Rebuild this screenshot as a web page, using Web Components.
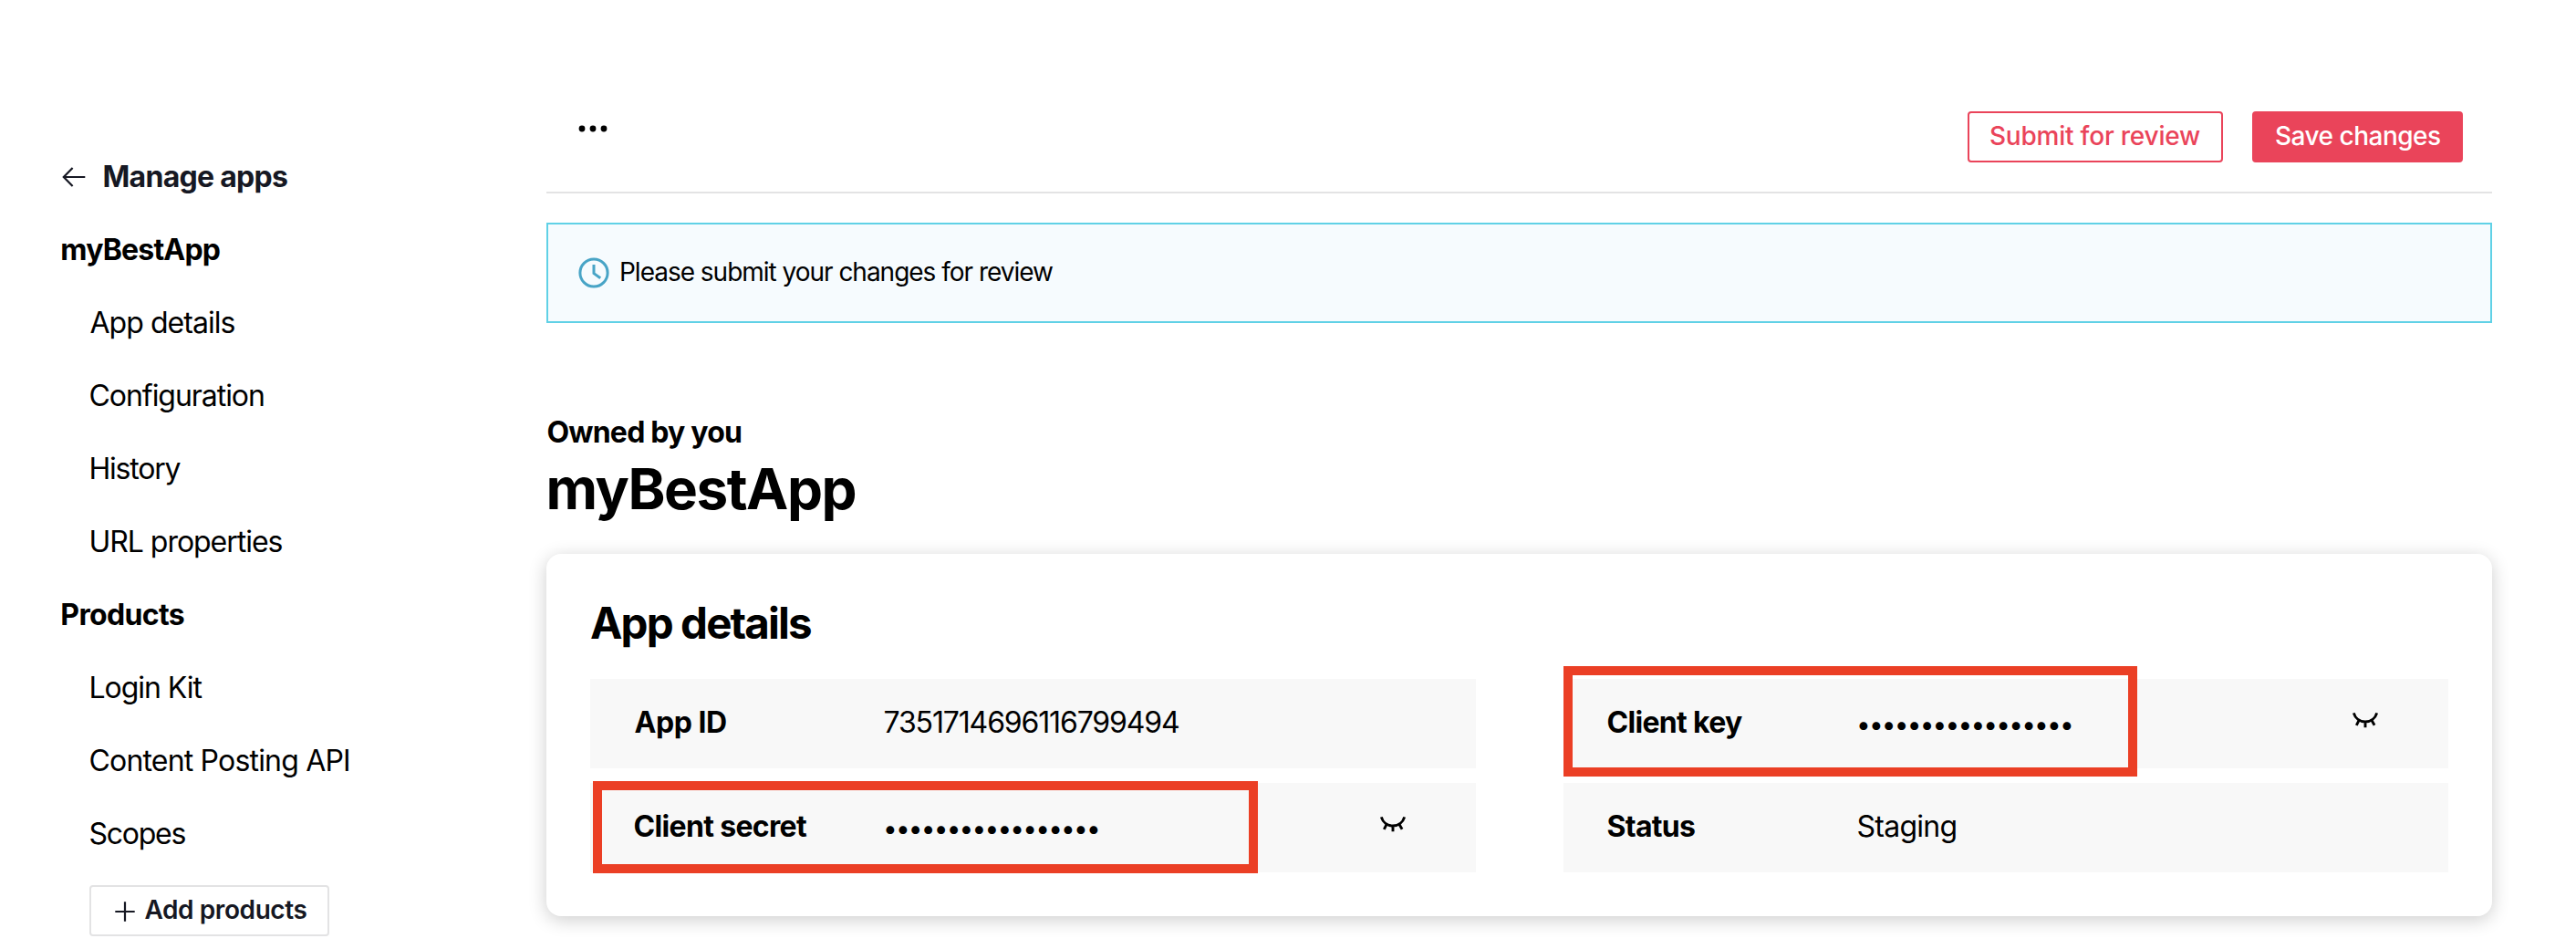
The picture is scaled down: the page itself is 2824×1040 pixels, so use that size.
<!DOCTYPE html>
<html lang="en">
<head>
<meta charset="utf-8">
<title>App details</title>
<style>
html,body{margin:0;background:#fff}
body{font-family:Inter,"Liberation Sans",sans-serif;font-size:32px;color:#000}
</style>
</head>
<body>
<developer-portal></developer-portal>
<script>
const define = (name, html, init) => {
  const t = document.createElement('template');
  t.innerHTML = html;
  customElements.define(name, class extends HTMLElement {
    constructor() {
      super();
      this.attachShadow({mode: 'open'}).append(t.content.cloneNode(true));
    }
    connectedCallback() { if (init) init.call(this, this.shadowRoot); }
  });
};

/* One line of text, tracked so that its ink spans the "span" width. */
define('text-line', `<style>
:host{display:block;white-space:pre;flex:none;line-height:1.25}
span{display:inline-block}
</style><span><slot></slot></span>`, function (root) {
  const cs = getComputedStyle(this), c = document.createElement('canvas').getContext('2d');
  c.font = `${cs.fontWeight} ${cs.fontSize} ${cs.fontFamily}`;
  const s = this.textContent, m = c.measureText(s), want = +this.getAttribute('span');
  const ls = (want - m.actualBoundingBoxLeft - m.actualBoundingBoxRight) / (s.length - 1);
  const span = root.querySelector('span');
  span.style.letterSpacing = ls.toFixed(3) + 'px';
  span.style.marginLeft = m.actualBoundingBoxLeft.toFixed(2) + 'px';
  this.style.width = want + 'px';
});

define('icon-back', `<style>:host{display:block;width:26px;height:22px}svg{display:block}</style>
<svg width="26" height="22" viewBox="0 0 26 22" fill="none" stroke="#161823" stroke-width="2.2"><path d="M25.3 11H1.8M11.6 1L1.8 11l9.8 10"/></svg>`);
define('icon-plus', `<style>:host{display:block;width:22px;height:22px}svg{display:block}</style>
<svg width="22" height="22" fill="none" stroke="#161823" stroke-width="2.2"><path d="M11 .3v21.4M.3 11h21.4"/></svg>`);
define('icon-clock', `<style>:host{display:block;width:34px;height:34px}svg{display:block}</style>
<svg width="34" height="34" fill="none" stroke="#48a4c6" stroke-width="3"><circle cx="17" cy="17" r="15.1"/><path d="M17 8v9.6l7.2 5.2"/></svg>`);
define('icon-eye', `<style>:host{display:block;width:28px;height:17px}svg{display:block}</style>
<svg width="28" height="17" fill="none" stroke="#000" stroke-width="2.9"><path d="M1.3.4C3 6.300 8 10 14 10S25 6.300 26.700.4M14 10v6.300M7.100 8.300L4.300 13.900M20.900 8.300l3.200 5.400"/></svg>`);
define('icon-more', `<style>:host{display:block;width:32px;height:8px}svg{display:block}</style>
<svg width="32" height="8"><circle cx="4" cy="4" r="3.4"/><circle cx="16" cy="4" r="3.4"/><circle cx="28" cy="4" r="3.4"/></svg>`);

define('nav-item', `<style>
:host{display:flex;align-items:center;height:80px;padding-left:98.500px}
:host([stem]){padding-left:99.500px}
:host([head]){padding-left:68.300px;font-weight:700}
:host([back]){padding-left:68px;font-weight:700;color:#161823;gap:20.500px}
</style><slot></slot>`);

define('app-button', `<style>
:host{display:flex;box-sizing:border-box;height:56px;align-items:center;padding:0 23px 1px;border:2px solid #ea445a;border-radius:4px;font-size:28px;font-weight:500;color:#ea445a}
:host([primary]){background:#ea445a;color:#fff;padding:0 23px 1px 24px}
:host([plain]){border-color:#e3e3e4;color:#161823;font-weight:600;width:263px;margin:16px 0 0 98px;padding:0 0 2px 25.500px;gap:11px}
::slotted(icon-plus){margin-top:3px}
</style><slot></slot>`);

define('side-nav', `<style>:host{display:block;width:599px;flex:none;padding-top:154px;box-sizing:border-box}</style>
<nav-item back><icon-back></icon-back><text-line span="200.500">Manage apps</text-line></nav-item>
<nav-item head><text-line span="172.500">myBestApp</text-line></nav-item>
<nav-item><text-line span="159">App details</text-line></nav-item>
<nav-item><text-line span="190.500">Configuration</text-line></nav-item>
<nav-item stem><text-line span="99">History</text-line></nav-item>
<nav-item stem><text-line span="210">URL properties</text-line></nav-item>
<nav-item head><text-line span="133.500">Products</text-line></nav-item>
<nav-item stem><text-line span="122">Login Kit</text-line></nav-item>
<nav-item><text-line span="283.500">Content Posting API</text-line></nav-item>
<nav-item><text-line span="105">Scopes</text-line></nav-item>
<app-button plain><icon-plus></icon-plus><text-line span="178">Add products</text-line></app-button>`);

define('top-bar', `<style>
:host{display:flex;box-sizing:border-box;height:212px;padding:122px 32px 0 35px;border-bottom:2px solid #e3e3e4;align-items:flex-start}
icon-more{margin-top:15px}
.actions{display:flex;gap:32px;margin-left:auto}
</style><icon-more></icon-more><div class="actions">
<app-button><text-line span="230">Submit for review</text-line></app-button>
<app-button primary><text-line span="180">Save changes</text-line></app-button></div>`);

define('info-alert', `<style>
:host{display:flex;box-sizing:border-box;height:110px;margin-top:32px;padding-left:33px;align-items:center;gap:13px;border:2px solid #60d1e6;background:#f6fbfe;font-size:28px}
text-line{padding-bottom:1px}
</style><icon-clock></icon-clock><text-line span="473">Please submit your changes for review</text-line>`);

define('field-row', `<style>
:host{position:relative;display:flex;height:98px;align-items:center;background:#f8f8f8;padding-left:48.500px}
.label{width:274px;font-weight:700;flex:none;padding-bottom:2px}
::slotted(text-line:not([slot])){padding-bottom:2px}
::slotted(icon-eye){margin:0 77px 8px auto}
</style><div class="label"><slot name="label"></slot></div><slot></slot>`);

define('secret-dots', `<style>
:host{display:block;white-space:pre;line-height:40px;padding-top:2px}
text-line{font-size:28px;margin-left:1.500px}
</style><text-line span="233">•••••••••••••••••</text-line>`);

/* Red annotation frame laid over a field row. */
define('focus-frame', `<style>
:host{position:absolute;box-sizing:border-box;border:10px solid #eb3f25}
:host([key]){left:0;top:-14px;width:629px;height:121px}
:host([secret]){left:3px;top:-2px;width:729px;height:101px}
</style>`);

define('details-card', `<style>
:host{display:block;box-sizing:border-box;height:397px;margin-top:32px;padding:46px 48px 0;border-radius:16px;background:#fff;box-shadow:0 4px 20px rgba(0,0,0,.2)}
.title{height:91px;font-size:47.500px;font-weight:700;padding-left:1px}
.grid{display:grid;grid-template-columns:971px 970px;column-gap:96px;row-gap:16px}
</style>
<div class="title"><text-line span="241">App details</text-line></div>
<div class="grid">
<field-row><text-line slot="label" span="100.500">App ID</text-line><text-line span="322.500">7351714696116799494</text-line></field-row>
<field-row><text-line slot="label" span="147.500">Client key</text-line><secret-dots></secret-dots><icon-eye></icon-eye><focus-frame key></focus-frame></field-row>
<field-row><text-line slot="label" span="189.500">Client secret</text-line><secret-dots></secret-dots><icon-eye></icon-eye><focus-frame secret></focus-frame></field-row>
<field-row><text-line slot="label" span="95.500">Status</text-line><text-line span="108">Staging</text-line></field-row>
</div>`);

define('developer-portal', `<style>
:host{display:flex;width:2824px;height:1040px;overflow:hidden;background:#fff}
main{width:2133px;display:block}
.owner{margin:100px 0 0 1.500px;font-weight:700}
.name{height:78px;margin:3px 0 0 2.500px;font-size:62px;font-weight:700}
</style>
<side-nav></side-nav>
<main>
<top-bar></top-bar>
<info-alert></info-alert>
<div class="owner"><text-line span="211.500">Owned by you</text-line></div>
<div class="name"><text-line span="336">myBestApp</text-line></div>
<details-card></details-card>
</main>`);
</script>
</body>
</html>
